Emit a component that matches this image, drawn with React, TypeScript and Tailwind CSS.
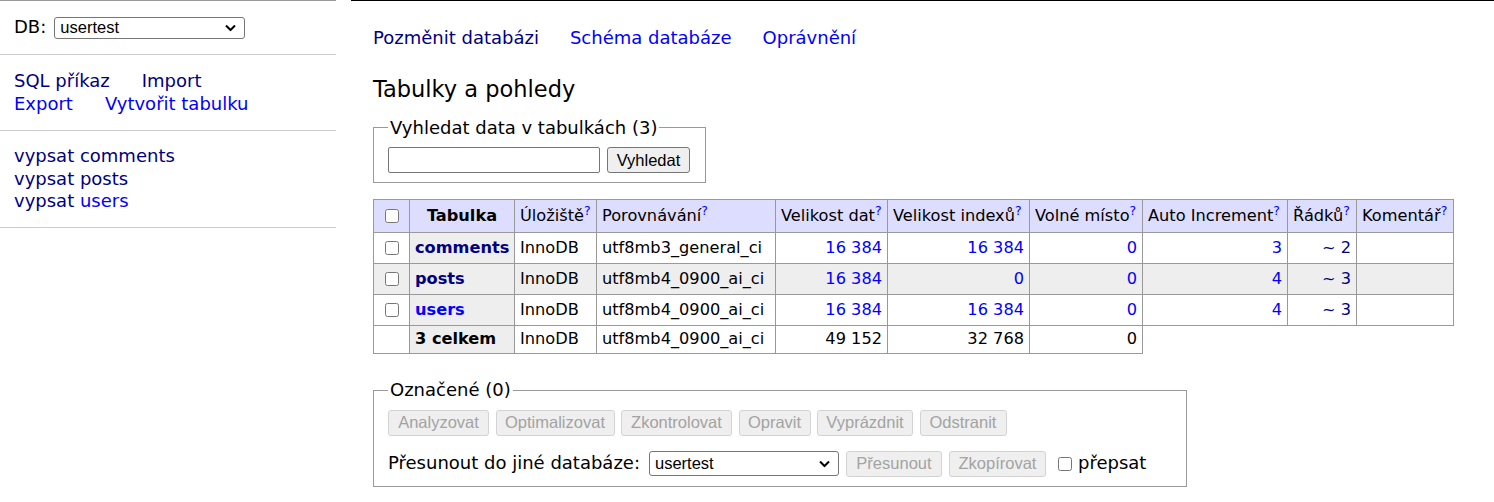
import * as React from 'react';

type Row = {
  name: string;
  visited: boolean;
  coll: string;
  data: string;
  idx: string;
  free: string;
  ai: string;
  rows: string;
  odd: boolean;
};

const rows: Row[] = [
  { name: 'comments', visited: true, coll: 'utf8mb3_general_ci', data: '16 384', idx: '16 384', free: '0', ai: '3', rows: '~ 2', odd: false },
  { name: 'posts', visited: true, coll: 'utf8mb4_0900_ai_ci', data: '16 384', idx: '0', free: '0', ai: '4', rows: '~ 3', odd: true },
  { name: 'users', visited: false, coll: 'utf8mb4_0900_ai_ci', data: '16 384', idx: '16 384', free: '0', ai: '4', rows: '~ 3', odd: false },
];

function Select({ value, className }: { value: string; className: string }) {
  return (
    <span className={`relative inline-flex ${className}`}>
      <select
        defaultValue={value}
        className="h-full w-full appearance-none rounded-[3px] border border-[#767676] bg-white pl-[5px] pr-[24px] font-['Liberation_Sans',Arial,sans-serif] text-[16.5px] leading-none text-black"
      >
        <option>{value}</option>
      </select>
      <svg
        className="pointer-events-none absolute right-[9px] top-1/2 -translate-y-1/2"
        width="11"
        height="7"
        viewBox="0 0 11 7"
      >
        <path d="M1 1l4.5 4.5L10 1" fill="none" stroke="#000" strokeWidth="2" />
      </svg>
    </span>
  );
}

function Btn({ children, className }: { children: React.ReactNode; className: string }) {
  return (
    <button
      type="button"
      disabled
      className={`h-[26px] rounded-[3px] border border-[#d3d3d3] bg-[#efefef] font-['Liberation_Sans',Arial,sans-serif] text-[16.5px] leading-none text-[#a3a3a3] ${className}`}
    >
      {children}
    </button>
  );
}

function Help() {
  return <sup className="top-[-0.45em] text-[12.5px] text-[#0000ff]">?</sup>;
}

function Check() {
  return <input type="checkbox" className="m-0 h-[14px] w-[14px] align-middle" />;
}

export default function App() {
  return (
    <div className="flex min-h-[502px] bg-white font-['DejaVu_Sans',Verdana,sans-serif] text-[18px] leading-[1.25] text-black">
      <aside className="w-[336px] shrink-0 border-t border-[#999]">
        <div className="flex h-[54px] items-center gap-[8px] border-b border-[#ccc] px-[14px]">
          <span>DB:</span>
          <Select value="usertest" className="h-[22px] w-[191px]" />
        </div>
        <div className="flex flex-col border-b border-[#ccc] px-[14px] py-[15px]">
          <div className="flex gap-[32px]">
            <a className="text-[#000080]">SQL příkaz</a>
            <a className="text-[#000080]">Import</a>
          </div>
          <div className="flex gap-[32px]">
            <a className="text-[#0000ff]">Export</a>
            <a className="text-[#0000ff]">Vytvořit tabulku</a>
          </div>
        </div>
        <div className="flex flex-col border-b border-[#ccc] px-[14px] py-[14px]">
          <a className="text-[#000080]">vypsat comments</a>
          <a className="text-[#000080]">vypsat posts</a>
          <span>
            <a className="text-[#000080]">vypsat</a> <a className="text-[#0000ff]">users</a>
          </span>
        </div>
      </aside>

      <main className="ml-[15px] flex-1 border-t border-black pl-[22px] pt-[26px]">
        <div className="flex gap-[31px]">
          <a className="text-[#000080]">Pozměnit databázi</a>
          <a className="text-[#0000ff]">Schéma databáze</a>
          <a className="text-[#0000ff]">Oprávnění</a>
        </div>

        <h2 className="mt-[25px] text-[22.5px] font-normal leading-[28px]">Tabulky a pohledy</h2>

        <fieldset className="mt-[14px] w-[333px] border border-[#999] px-[14px] pb-[9px] pt-[8px]">
          <legend className="px-[2px]">Vyhledat data v tabulkách (3)</legend>
          <div className="flex gap-[7px]">
            <input
              type="text"
              className="h-[26px] w-[212px] rounded-[2px] border border-[#767676] bg-white"
            />
            <button
              type="button"
              className="h-[26px] w-[83px] rounded-[3px] border border-[#767676] bg-[#efefef] font-['Liberation_Sans',Arial,sans-serif] text-[16.5px] leading-none text-black"
            >
              Vyhledat
            </button>
          </div>
        </fieldset>

        <table className="mt-[16px] w-[1081px] table-fixed border-collapse text-[16.2px] leading-[1.25]">
          <colgroup>
            <col className="w-[36px]" />
            <col className="w-[105px]" />
            <col className="w-[82px]" />
            <col className="w-[179px]" />
            <col className="w-[112px]" />
            <col className="w-[142px]" />
            <col className="w-[113px]" />
            <col className="w-[145px]" />
            <col className="w-[69px]" />
            <col className="w-[97px]" />
          </colgroup>
          <thead>
            <tr className="h-[33px] bg-[#ddf]">
              <td className="border border-[#999] text-center">
                <Check />
              </td>
              <th className="border border-[#999] px-[5px] text-center font-bold">Tabulka</th>
              <td className="border border-[#999] px-[5px] whitespace-nowrap">Úložiště<Help /></td>
              <td className="border border-[#999] px-[5px] whitespace-nowrap">Porovnávání<Help /></td>
              <td className="border border-[#999] px-[5px] whitespace-nowrap">Velikost dat<Help /></td>
              <td className="border border-[#999] px-[5px] whitespace-nowrap">Velikost indexů<Help /></td>
              <td className="border border-[#999] px-[5px] whitespace-nowrap">Volné místo<Help /></td>
              <td className="border border-[#999] px-[5px] whitespace-nowrap">Auto Increment<Help /></td>
              <td className="border border-[#999] px-[5px] whitespace-nowrap">Řádků<Help /></td>
              <td className="border border-[#999] px-[5px] whitespace-nowrap">Komentář<Help /></td>
            </tr>
          </thead>
          <tbody>
            {rows.map((r) => (
              <tr key={r.name} className={r.odd ? 'h-[31px] bg-[#eee]' : 'h-[31px] bg-white'}>
                <td className="border border-[#999] text-center">
                  <Check />
                </td>
                <th className="border border-[#999] bg-[#eee] px-[5px] text-left font-bold">
                  <a className={r.visited ? 'text-[#000080]' : 'text-[#0000ff]'}>{r.name}</a>
                </th>
                <td className="border border-[#999] px-[5px]">InnoDB</td>
                <td className="border border-[#999] px-[5px] whitespace-nowrap">{r.coll}</td>
                <td className="border border-[#999] px-[5px] text-right text-[#0000ff]">{r.data}</td>
                <td className="border border-[#999] px-[5px] text-right text-[#0000ff]">{r.idx}</td>
                <td className="border border-[#999] px-[5px] text-right text-[#0000ff]">{r.free}</td>
                <td className="border border-[#999] px-[5px] text-right text-[#0000ff]">{r.ai}</td>
                <td className="border border-[#999] px-[5px] text-right text-[#000080]">{r.rows}</td>
                <td className="border border-[#999] px-[5px]"></td>
              </tr>
            ))}
            <tr className="h-[28px] bg-white">
              <td className="border border-[#999]"></td>
              <th className="border border-[#999] bg-[#eee] px-[5px] text-left font-bold whitespace-nowrap">3 celkem</th>
              <td className="border border-[#999] px-[5px]">InnoDB</td>
              <td className="border border-[#999] px-[5px] whitespace-nowrap">utf8mb4_0900_ai_ci</td>
              <td className="border border-[#999] px-[5px] text-right">49 152</td>
              <td className="border border-[#999] px-[5px] text-right">32 768</td>
              <td className="border border-[#999] px-[5px] text-right">0</td>
            </tr>
          </tbody>
        </table>

        <fieldset className="mt-[25px] w-[814px] border border-[#999] px-[14px] pb-[9px] pt-[8px]">
          <legend className="px-[2px]">Označené (0)</legend>
          <div className="flex gap-[6.5px]">
            <Btn className="w-[101px]">Analyzovat</Btn>
            <Btn className="w-[119px]">Optimalizovat</Btn>
            <Btn className="w-[111px]">Zkontrolovat</Btn>
            <Btn className="w-[72px]">Opravit</Btn>
            <Btn className="w-[96px]">Vyprázdnit</Btn>
            <Btn className="w-[87px]">Odstranit</Btn>
          </div>
          <div className="mt-[15px] flex items-center">
            <span>Přesunout do jiné databáze:</span>
            <Select value="usertest" className="ml-[9px] h-[25px] w-[190px]" />
            <Btn className="ml-[7px] w-[96px]">Přesunout</Btn>
            <Btn className="ml-[7px] w-[97px]">Zkopírovat</Btn>
            <label className="ml-[12px] flex items-center gap-[6px]">
              <Check />
              <span>přepsat</span>
            </label>
          </div>
        </fieldset>
      </main>
    </div>
  );
}
